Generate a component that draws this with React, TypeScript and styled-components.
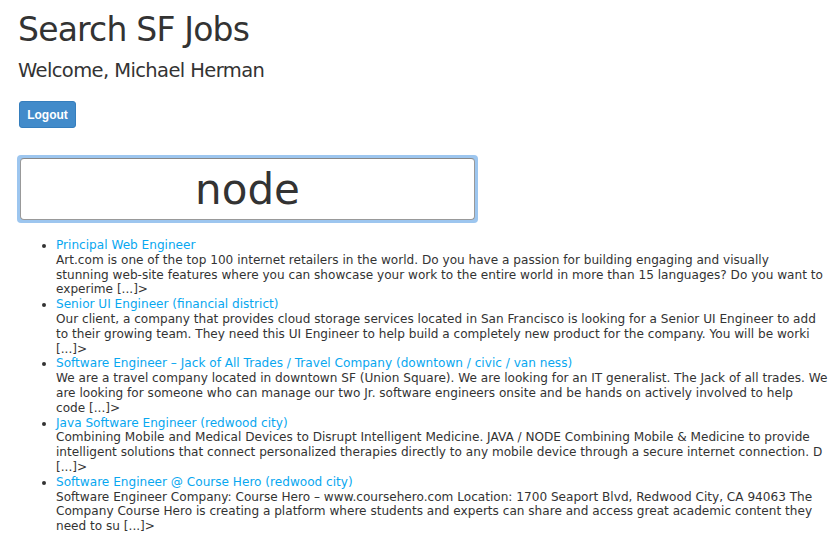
import { Fragment } from "react"
import styled, { createGlobalStyle } from "styled-components"

// descriptions keep the line breaks seen in the listing
const jobs = [
  {
    title: "Principal Web Engineer",
    lines: [
      "Art.com is one of the top 100 internet retailers in the world. Do you have a passion for building engaging and visually",
      "stunning web-site features where you can showcase your work to the entire world in more than 15 languages? Do you want to",
      "experime [...]>",
    ],
  },
  {
    title: "Senior UI Engineer (financial district)",
    lines: [
      "Our client, a company that provides cloud storage services located in San Francisco is looking for a Senior UI Engineer to add",
      "to their growing team. They need this UI Engineer to help build a completely new product for the company. You will be worki",
      "[...]>",
    ],
  },
  {
    title: "Software Engineer \u2013 Jack of All Trades / Travel Company (downtown / civic / van ness)",
    lines: [
      "We are a travel company located in downtown SF (Union Square). We are looking for an IT generalist. The Jack of all trades. We",
      "are looking for someone who can manage our two Jr. software engineers onsite and be hands on actively involved to help",
      "code [...]>",
    ],
  },
  {
    title: "Java Software Engineer (redwood city)",
    lines: [
      "Combining Mobile and Medical Devices to Disrupt Intelligent Medicine. JAVA / NODE Combining Mobile & Medicine to provide",
      "intelligent solutions that connect personalized therapies directly to any mobile device through a secure internet connection. D",
      "[...]>",
    ],
  },
  {
    title: "Software Engineer @ Course Hero (redwood city)",
    lines: [
      "Software Engineer Company: Course Hero \u2013 www.coursehero.com Location: 1700 Seaport Blvd, Redwood City, CA 94063 The",
      "Company Course Hero is creating a platform where students and experts can share and access great academic content they",
      "need to su [...]>",
    ],
  },
]

const GlobalStyle = createGlobalStyle`
  body {
    margin: 0;
    background: #fff;
    color: #333;
    font-family: "DejaVu Sans", "Liberation Sans", sans-serif;
  }
`

const Page = styled.div`
  padding: 0 8px 0 18px;
`

const Title = styled.h1`
  margin: 12px 0 0;
  font-size: 33px;
  font-weight: 400;
  line-height: 36px;
  letter-spacing: -0.8px;
  color: #333;
`

const Welcome = styled.h3`
  margin: 11px 0 0;
  font-size: 19.5px;
  font-weight: 400;
  line-height: 24px;
  letter-spacing: -0.6px;
  color: #333;
`

const Button = styled.button`
  display: block;
  margin: 18px 0 0 1px;
  width: 57px;
  height: 27px;
  padding: 0;
  border: 1px solid #357ebd;
  border-radius: 3px;
  background: #428bca;
  color: #fff;
  font-family: "Liberation Sans", Arial, sans-serif;
  font-size: 12px;
  font-weight: 700;
`

const SearchBox = styled.div`
  margin: 27px 0 0 -1px;
  width: 461px;
  padding: 3px;
  box-sizing: border-box;
  border-radius: 4px;
  background: #9dc6ef;
`

const SearchInput = styled.input`
  display: block;
  width: 100%;
  height: 62px;
  box-sizing: border-box;
  border: 1px solid #999;
  border-top-color: #888;
  border-radius: 4px;
  background: #fff;
  color: #333;
  text-align: center;
  font-family: "DejaVu Sans", sans-serif;
  font-size: 42px;
  outline: none;
`

const List = styled.ul`
  margin: 15px 0 0;
  padding-left: 38px;
  list-style: disc;
  font-size: 12.1px;
  line-height: 14.8px;
  white-space: nowrap;
`

const Item = styled.li`
  color: #333;
`

const JobLink = styled.a`
  display: block;
  color: #08a7f0;
  text-decoration: none;
`

export default function App() {
  return (
    <Page>
      <GlobalStyle />
      <Title>Search SF Jobs</Title>
      <Welcome>Welcome, Michael Herman</Welcome>
      <Button>Logout</Button>
      <SearchBox>
        <SearchInput defaultValue="node" />
      </SearchBox>
      <List>
        {jobs.map((job) => (
          <Item key={job.title}>
            <JobLink href="#">{job.title}</JobLink>
            {job.lines.map((line, i) => (
              <Fragment key={i}>
                {i > 0 && <br />}
                {line}
              </Fragment>
            ))}
          </Item>
        ))}
      </List>
    </Page>
  )
}
